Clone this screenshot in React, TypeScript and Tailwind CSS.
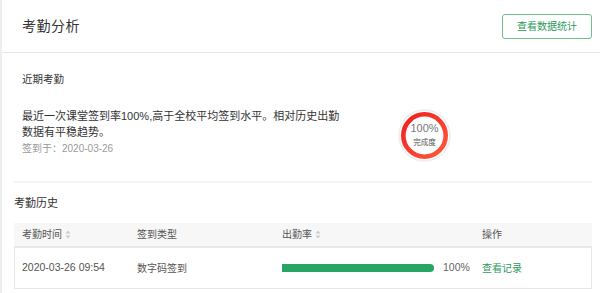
const font = { fontFamily: '"Liberation Sans", "Noto Sans CJK SC", sans-serif' };

const SortIcon = () => (
  <svg width="6" height="9" viewBox="0 0 6 9" className="ml-[3px] inline-block">
    <path d="M3 0.5 L5.5 3.5 L0.5 3.5 Z" fill="#c8ccd3" />
    <path d="M3 8.5 L5.5 5.5 L0.5 5.5 Z" fill="#c8ccd3" />
  </svg>
);

const Ring = () => (
  <div className="relative w-[53px] h-[53px] shrink-0">
    <svg width="53" height="53" viewBox="0 0 53 53" className="absolute inset-0">
      <defs>
        <linearGradient id="rg" x1="0" y1="0" x2="1" y2="1">
          <stop offset="0%" stopColor="#f01d1d" />
          <stop offset="100%" stopColor="#ff5a3c" />
        </linearGradient>
      </defs>
      <circle cx="26.5" cy="26.5" r="25.5" fill="#fff" stroke="#ededed" strokeWidth="1.5" />
      <circle cx="26.5" cy="26.5" r="21.2" fill="none" stroke="url(#rg)" strokeWidth="4.6" />
    </svg>
    <div className="absolute inset-0 flex flex-col items-center justify-center">
      <span className="text-[11px] leading-[13px] text-[#777] mt-[-3px]">100%</span>
      <span className="text-[7.5px] leading-[9px] text-[#555] mt-[3px]">完成度</span>
    </div>
  </div>
);

export default function App() {
  return (
    <div style={font} className="w-[600px] h-[293px] overflow-hidden bg-white border-l-2 border-[#eceef2]">
      <div className="h-[53px] flex items-center justify-between pl-[20px] pr-[8px] border-b border-[#e4e7ed]">
        <h1 className="text-[14px] text-[#333] tracking-[0.5px]">考勤分析</h1>
        <button className="w-[90px] h-[25px] rounded-[3px] border border-[#6cc08e] text-[10px] text-[#2c9a5c] bg-white">
          查看数据统计
        </button>
      </div>

      <div className="pl-[20px] pt-[18px]">
        <div className="text-[10.5px] leading-[16px] text-[#333]">近期考勤</div>
        <div className="flex items-center mt-[16px]">
          <div className="w-[318px]">
            <p className="text-[11px] leading-[16px] text-[#333]">
              最近一次课堂签到率100%,高于全校平均签到水平。相对历史出勤数据有平稳趋势。
            </p>
            <p className="mt-[1px] text-[10px] leading-[16px] text-[#9a9a9a]">签到于：2020-03-26</p>
          </div>
          <div className="ml-[58px] mt-[6px]">
            <Ring />
          </div>
        </div>
      </div>

      <div className="ml-[12px] mr-[8px] mt-[19px] h-[2px] bg-[#f3f3f3]" />

      <div className="pl-[12px] pr-[8px]">
        <div className="mt-[12px] text-[11px] leading-[16px] text-[#333]">考勤历史</div>
        <div className="mt-[12px]">
          <div className="grid grid-cols-[115px_145px_200px_1fr] h-[25px] items-center pl-[8px] bg-[#f7f7f7] border-b-2 border-[#e8e8e8] text-[10px] text-[#555]">
            <div className="flex items-center">考勤时间<SortIcon /></div>
            <div>签到类型</div>
            <div className="flex items-center">出勤率<SortIcon /></div>
            <div>操作</div>
          </div>
          <div className="grid grid-cols-[115px_145px_200px_1fr] h-[41px] items-center pl-[7px] border-x border-b border-[#e8e8e8] text-[10px] text-[#555]">
            <div className="text-[10.5px]">2020-03-26 09:54</div>
            <div>数字码签到</div>
            <div className="flex items-center">
              <div className="w-[152px] h-[8px] rounded-r-full rounded-l-[1px] bg-[#26a566]" />
              <span className="ml-[9px] text-[10.5px] text-[#666]">100%</span>
            </div>
            <div className="text-[#2c9a5c]">查看记录</div>
          </div>
        </div>
      </div>
    </div>
  );
}
